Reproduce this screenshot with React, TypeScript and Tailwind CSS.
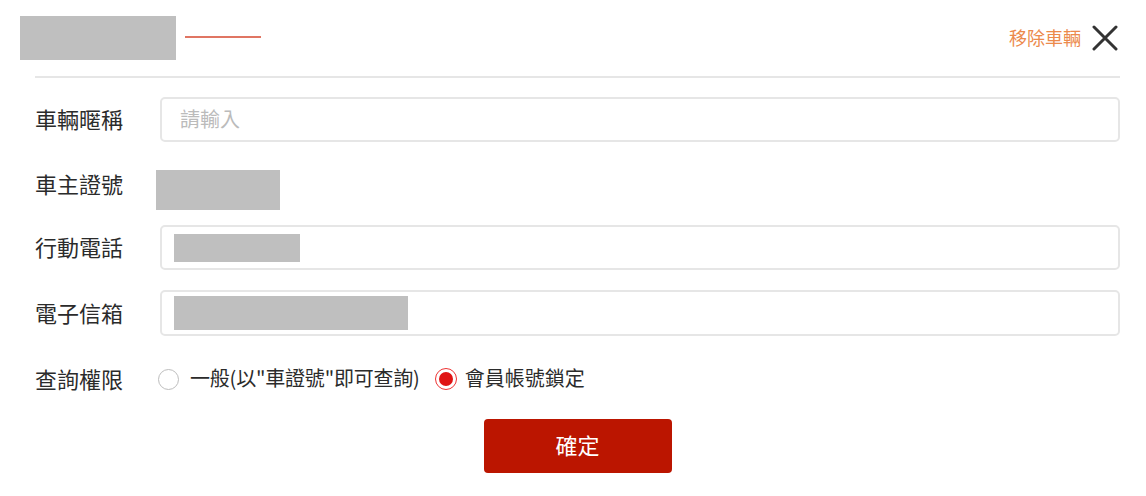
import React from "react";

const font = { fontFamily: '"Noto Sans CJK TC", "Noto Sans", sans-serif' };

function Label({ children }: { children: React.ReactNode }) {
  return (
    <div className="w-[125px] shrink-0 text-[22px] leading-[26px] text-[#2b2b2b] -mt-[3px]">{children}</div>
  );
}

export default function App() {
  return (
    <div className="w-[1146px] h-[496px] bg-white overflow-hidden" style={font}>
      {/* Header */}
      <div className="flex items-center pt-[16px] pl-[20px] pr-[28px]">
        <div className="w-[156px] h-[44px] bg-[#bfbfbf]" />
        <div className="ml-[9px] w-[76px] h-[2px] bg-[#e07563] -mt-[3px]" />
        <div className="ml-auto flex items-center gap-[11px]">
          <span className="text-[18px] leading-[24px] text-[#ec8a4c] -mt-[2px]">移除車輛</span>
          <svg width="26" height="26" viewBox="0 0 26 26" className="block">
            <path d="M2 2 L24 24 M24 2 L2 24" stroke="#333" strokeWidth="3" strokeLinecap="round" fill="none" />
          </svg>
        </div>
      </div>
      <div className="mt-[16px] ml-[35px] mr-[26px] h-[2px] bg-[#e6e6e6]" />

      {/* Form */}
      <div className="pl-[35px] pr-[26px]">
        <div className="mt-[19px] flex items-center">
          <Label>車輛暱稱</Label>
          <div className="flex-1 h-[45px] border-2 border-[#e6e6e6] rounded-[5px] flex items-center pl-[18px]">
            <span className="text-[20px] text-[#bbb] -mt-[2px]">請輸入</span>
          </div>
        </div>

        <div className="mt-[28px] flex items-start">
          <div className="w-[125px] shrink-0 text-[22px] leading-[26px] text-[#2b2b2b]">車主證號</div>
          <div className="-ml-[4px] w-[124px] h-[40px] bg-[#bfbfbf]" />
        </div>

        <div className="mt-[15px] flex items-center">
          <Label>行動電話</Label>
          <div className="flex-1 h-[45px] border-2 border-[#e6e6e6] rounded-[5px] flex items-center pl-[12px]">
            <div className="w-[126px] h-[28px] bg-[#bfbfbf]" />
          </div>
        </div>

        <div className="mt-[20px] flex items-center">
          <Label>電子信箱</Label>
          <div className="flex-1 h-[46px] border-2 border-[#e6e6e6] rounded-[5px] flex items-center pl-[12px]">
            <div className="w-[234px] h-[34px] bg-[#bfbfbf]" />
          </div>
        </div>

        <div className="mt-[28px] h-[30px] flex items-center">
          <Label>查詢權限</Label>
          <div className="-ml-[2px] flex items-center">
            <span className="w-[21px] h-[21px] rounded-full border border-[#bdbdbd] bg-white" />
            <span className="ml-[11px] text-[20px] leading-[26px] text-[#2b2b2b] -mt-[2px] tracking-[-0.2px]">一般(以"車證號"即可查詢)</span>
            <span className="ml-[15px] w-[22px] h-[22px] rounded-full border border-[#e33] flex items-center justify-center">
              <span className="w-[14px] h-[14px] rounded-full bg-[#e01414]" />
            </span>
            <span className="ml-[8px] text-[20px] leading-[26px] text-[#2b2b2b] -mt-[2px]">會員帳號鎖定</span>
          </div>
        </div>

        <div className="mt-[25px] flex justify-center">
          <button className="w-[188px] h-[54px] rounded-[4px] bg-[#bb1500] text-white text-[22px] pb-[4px]">確定</button>
        </div>
      </div>
    </div>
  );
}
